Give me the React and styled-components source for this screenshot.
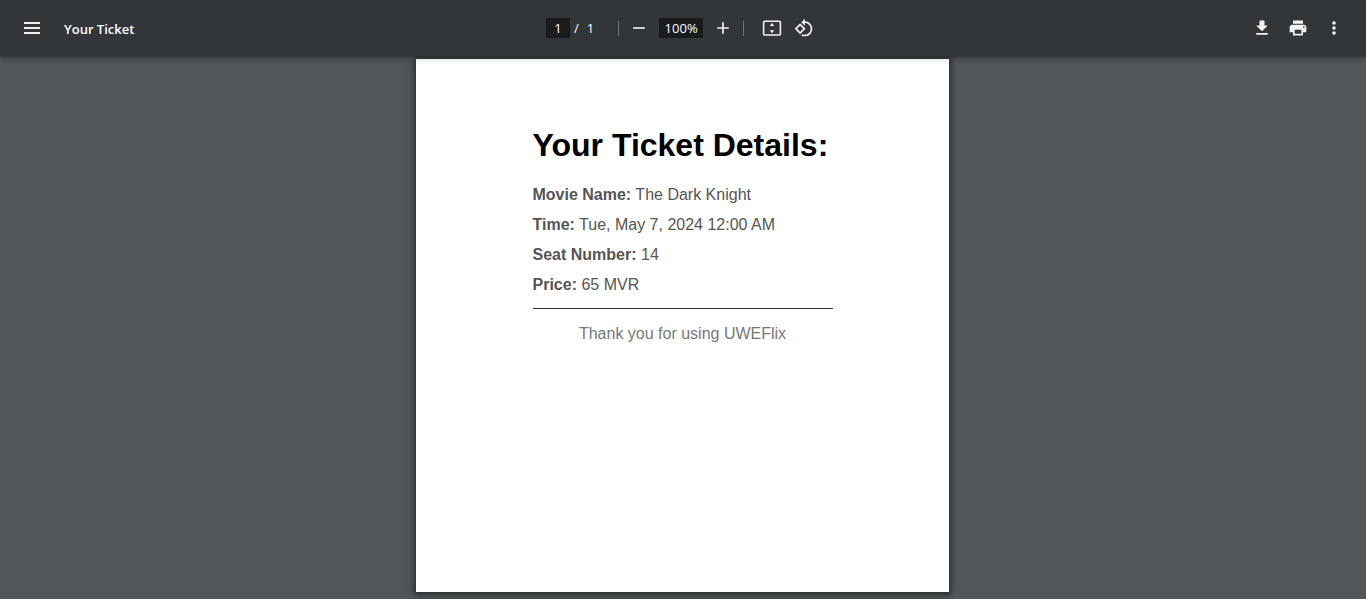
import React from "react";
import styled, { createGlobalStyle } from "styled-components";

const GlobalStyle = createGlobalStyle`
  * { box-sizing: border-box; }
  body {
    margin: 0;
    background: #525659;
    font-family: "Open Sans", "Noto Sans", sans-serif;
  }
`;

const Viewer = styled.div`
  min-height: 100vh;
  background: #525659;
`;

const Toolbar = styled.header`
  position: sticky;
  top: 0;
  z-index: 1;
  display: grid;
  grid-template-columns: 1fr auto 1fr;
  align-items: center;
  height: 56px;
  padding: 0 16px;
  background: #323639;
  color: #fff;
  font-size: 13px;
  line-height: 20px;
  box-shadow: 0 -2px 8px rgba(0, 0, 0, 0.09), 0 4px 8px rgba(0, 0, 0, 0.06),
    0 1px 2px rgba(0, 0, 0, 0.3), 0 2px 6px rgba(0, 0, 0, 0.15);
`;

const Group = styled.div`
  display: flex;
  align-items: center;
  gap: ${(p) => p.$gap || 0}px;
  justify-content: ${(p) => (p.$end ? "flex-end" : "flex-start")};
`;

const Title = styled.span`
  font-weight: 600;
  padding-top: 2px;
`;

const IconButton = styled.button`
  display: flex;
  align-items: center;
  justify-content: center;
  width: 32px;
  height: 32px;
  padding: 0;
  border: 0;
  border-radius: 50%;
  background: transparent;
  color: #f1f1f1;
  cursor: pointer;

  &:hover { background: rgba(255, 255, 255, 0.08); }

  svg {
    width: 20px;
    height: 20px;
    fill: currentColor;
  }
`;

const Field = styled.input`
  width: ${(p) => p.$width}px;
  height: 20px;
  padding: 0;
  border: 0;
  background: #191b1c;
  color: #fff;
  font: inherit;
  text-align: center;
`;

const PageCount = styled.span`
  display: flex;
  gap: 8px;
  padding: 0 24px 0 4px;
`;

const Divider = styled.span`
  width: 1px;
  height: 15px;
  margin-right: ${(p) => p.$after}px;
  background: #707375;
`;

const Canvas = styled.main`
  display: flex;
  justify-content: center;
  padding: 3px 8px 7px;
`;

const Sheet = styled.article`
  display: flex;
  justify-content: center;
  align-items: flex-start;
  width: 533px;
  max-width: 100%;
  aspect-ratio: 1;
  margin-right: 1px;
  padding-top: 66px;
  background: #fff;
  color: #555;
  font: 16px/20px "Liberation Sans", Arial, sans-serif;
  box-shadow: 0 1px 6px 2px rgba(0, 0, 0, 0.5);
`;

const Ticket = styled.section`
  display: flex;
  flex-direction: column;
  min-width: 300px;
`;

const Heading = styled.h1`
  margin: 0 0 20px;
  color: #000;
  font-size: 32px;
  line-height: 40px;
`;

const Detail = styled.p`
  margin: 0 0 10px;
`;

const Rule = styled.hr`
  width: 100%;
  height: 1px;
  margin: 3px 0 15px;
  border: 0;
  background: #333;
`;

const Thanks = styled.p`
  margin: 0;
  color: #777;
  text-align: center;
`;

const icons = {
  menu: <path d="M2 4h16v2H2zM2 9h16v2H2zM2 14h16v2H2z" />,
  minus: <path transform="scale(.8333)" d="M5 11h14v2H5z" />,
  plus: <path transform="scale(.8333)" d="M19 13h-6v6h-2v-6H5v-2h6V5h2v6h6z" />,
  fit: (
    <>
      <rect x="1.6" y="3.2" width="16.8" height="13.8" rx="1" fill="none" stroke="currentColor" strokeWidth="1.6" />
      <path d="M10 5l2.3 3H7.7zM10 15.2L7.7 12.2h4.6z" />
    </>
  ),
  rotate: (
    <path
      transform="scale(.8333)"
      d="M7.34 6.41L.86 12.9l6.49 6.48 6.49-6.48-6.5-6.49zM3.69 12.9l3.66-3.66L11 12.9l-3.66 3.66-3.65-3.66zm15.67-6.26C17.61 4.88 15.3 4 13 4V.76L8.76 5 13 9.24V6c1.79 0 3.58.68 4.95 2.05 2.73 2.73 2.73 7.17 0 9.9C16.58 19.32 14.79 20 13 20c-.97 0-1.94-.21-2.84-.61l-1.49 1.49C10.02 21.62 11.51 22 13 22c2.3 0 4.61-.88 6.36-2.64 3.52-3.51 3.52-9.21 0-12.72z"
    />
  ),
  download: <path transform="scale(.8333)" d="M19 9h-4V3H9v6H5l7 7 7-7zM5 18v2h14v-2H5z" />,
  print: (
    <path
      transform="scale(.8333)"
      d="M19 8H5c-1.66 0-3 1.34-3 3v6h4v4h12v-4h4v-6c0-1.66-1.34-3-3-3zm-3 11H8v-5h8v5zm3-7c-.55 0-1-.45-1-1s.45-1 1-1 1 .45 1 1-.45 1-1 1zm-1-9H6v4h12V3z"
    />
  ),
  more: (
    <>
      <circle cx="10" cy="5" r="1.8" />
      <circle cx="10" cy="10" r="1.8" />
      <circle cx="10" cy="15" r="1.8" />
    </>
  ),
};

function ToolButton({ icon, label }) {
  return (
    <IconButton type="button" aria-label={label}>
      <svg viewBox="0 0 20 20" aria-hidden="true">{icons[icon]}</svg>
    </IconButton>
  );
}

const details = [
  ["Movie Name:", "The Dark Knight"],
  ["Time:", "Tue, May 7, 2024 12:00 AM"],
  ["Seat Number:", "14"],
  ["Price:", "65 MVR"],
];

export default function App() {
  return (
    <Viewer>
      <GlobalStyle />
      <Toolbar>
        <Group $gap={16}>
          <ToolButton icon="menu" label="Menu" />
          <Title>Your Ticket</Title>
        </Group>
        <Group>
          <Field $width={24} defaultValue="1" aria-label="Page number" />
          <PageCount>
            <span>/</span>
            <span>1</span>
          </PageCount>
          <Divider $after={4} />
          <Group $gap={4}>
            <ToolButton icon="minus" label="Zoom out" />
            <Field $width={44} defaultValue="100%" aria-label="Zoom level" />
            <ToolButton icon="plus" label="Zoom in" />
            <Divider $after={12} />
          </Group>
          <Group>
            <ToolButton icon="fit" label="Fit to page" />
            <ToolButton icon="rotate" label="Rotate counterclockwise" />
          </Group>
        </Group>
        <Group $gap={4} $end>
          <ToolButton icon="download" label="Download" />
          <ToolButton icon="print" label="Print" />
          <ToolButton icon="more" label="More actions" />
        </Group>
      </Toolbar>
      <Canvas>
        <Sheet>
          <Ticket>
            <Heading>Your Ticket Details:</Heading>
            {details.map(([label, value]) => (
              <Detail key={label}>
                <strong>{label}</strong> {value}
              </Detail>
            ))}
            <Rule />
            <Thanks>Thank you for using UWEFlix</Thanks>
          </Ticket>
        </Sheet>
      </Canvas>
    </Viewer>
  );
}
